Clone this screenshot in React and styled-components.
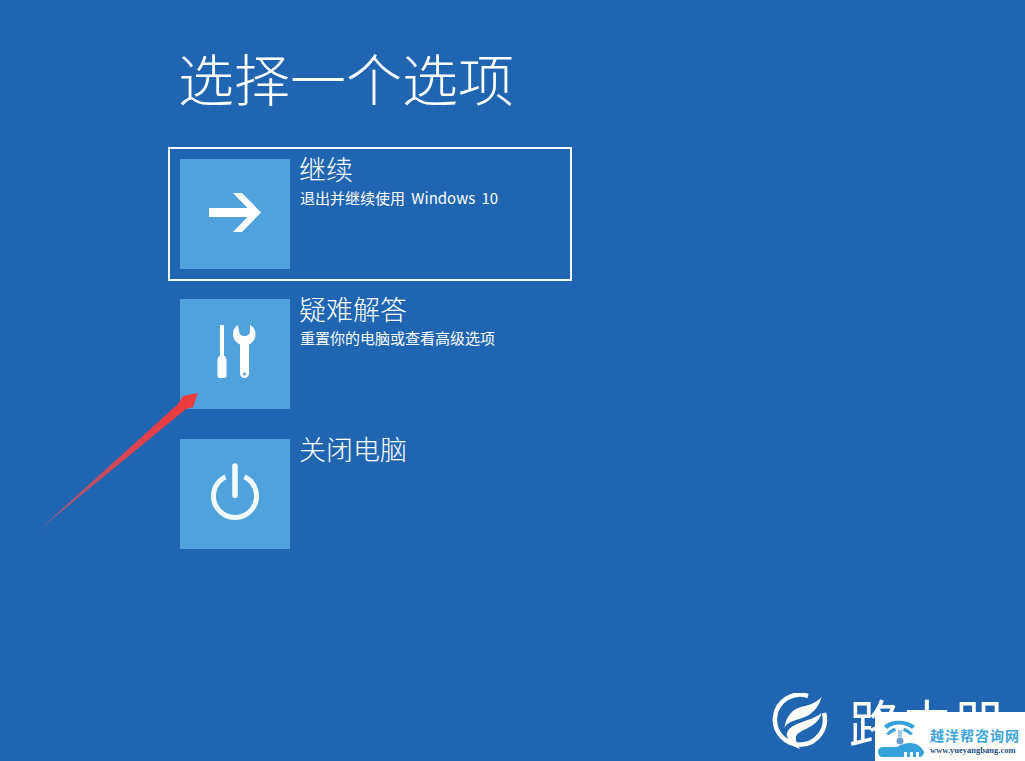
import React from "react"
import styled, { createGlobalStyle } from "styled-components"

const cjk = `"Noto Sans CJK SC", "Noto Sans", sans-serif`

const Global = createGlobalStyle`
  html, body { margin: 0; padding: 0; background: #1f65b1; }
  body { width: 1025px; height: 761px; overflow: hidden; }
`

const Screen = styled.div`
  position: relative;
  width: 1025px;
  height: 761px;
  overflow: hidden;
  background: #1f65b1;
  color: #fff;
  font-family: ${cjk};
  padding: 0 0 0 168px;
  box-sizing: border-box;
`

const Title = styled.h1`
  margin: 0;
  padding: 36px 0 0 10px;
  height: 147px;
  box-sizing: border-box;
  font-size: 56px;
  line-height: 82px;
  font-weight: 300;
  white-space: nowrap;
`

const Options = styled.div`
  display: flex;
  flex-direction: column;
  gap: 6px;
  width: 404px;
`

const Option = styled.div`
  display: flex;
  gap: 10px;
  height: 134px;
  padding: 10px;
  box-sizing: border-box;
  border: 2px solid ${(p) => (p.$selected ? "#f2f8fb" : "transparent")};
`

const Tile = styled.div`
  display: flex;
  align-items: center;
  justify-content: center;
  width: 110px;
  height: 110px;
  flex: none;
  background: #4fa2dc;
`

const Copy = styled.div`
  display: flex;
  flex-direction: column;
  margin: -7px 0 0 -1px;
`

const Name = styled.div`
  font-size: 27px;
  line-height: 34px;
  font-weight: 300;
  white-space: nowrap;
`

const Note = styled.div`
  font-size: 15px;
  line-height: 20px;
  margin: 2px 0 0 1px;
  font-weight: 400;
  white-space: nowrap;
  word-spacing: 3px;
`

const Pointer = styled.svg`
  position: absolute;
  left: 0;
  top: 0;
  pointer-events: none;
`

const BrandLogo = styled.svg`
  position: absolute;
  left: 771px;
  top: 693px;
`

const BrandName = styled.div`
  position: absolute;
  left: 849px;
  top: 680px;
  font-size: 52px;
  line-height: 84px;
  font-weight: 400;
  white-space: nowrap;
`

const Badge = styled.div`
  position: absolute;
  right: 0;
  bottom: 0;
  width: 150px;
  height: 49px;
  display: flex;
  background: #fff;
  overflow: hidden;
`

const BadgeMark = styled.svg`
  flex: none;
  margin: 2px 0 0 2px;
`

const BadgeText = styled.div`
  display: flex;
  flex-direction: column;
  align-items: flex-start;
  margin-left: 1px;
  padding-top: 14px;
`

const BadgeTitle = styled.div`
  color: #3ea6dc;
  font-size: 14px;
  line-height: 18px;
  font-weight: 700;
  white-space: nowrap;
  letter-spacing: 1px;
`

const BadgeUrl = styled.div`
  color: #1e4f82;
  font-family: "Liberation Serif", serif;
  font-size: 8.500px;
  line-height: 12px;
  font-weight: 700;
  white-space: nowrap;
`

const ArrowIcon = () => (
  <svg width="54" height="44" viewBox="0 0 54 44">
    <path d="M1 16H39.500L25 1H34L53 20.500 34 40H25L39.500 25H1z" fill="#fff" />
  </svg>
)

const ToolsIcon = () => (
  <svg width="60" height="70" viewBox="0 0 60 70">
    <path
      d="M15 7c0-.6.4-1 1-1h2c.6 0 1 .4 1 1v30h.5c.6 0 1 .3 1.200 1l.8 3v16c0 1.200-.8 2-2 2h-5c-1.200 0-2-.8-2-2V41l.8-3c.2-.7.6-1 1.200-1h.5z"
      fill="#fff"
    />
    <path
      fillRule="evenodd"
      d="M33 6C29.500 8 28 11.500 28 15c0 5 3 8.500 7 10.500V54.500a4.500 4.500 0 0 0 9 0V25.500c4-2 6.500-5.500 6.500-10.500 0-3.500-1.500-7-5.500-9v6c0 3-2.500 5-5.500 5S34 15 34 12zM39.500 53.500a1.500 1.500 0 1 0 0 3 1.500 1.500 0 0 0 0-3z"
      fill="#fff"
    />
  </svg>
)

const PowerIcon = () => (
  <svg width="54" height="62" viewBox="0 0 54 62">
    <path d="M17.500 13.700A21.500 21.500 0 1 0 36.500 13.700" fill="none" stroke="#f4fbff" strokeWidth="5" />
    <path d="M27 3v29.500" fill="none" stroke="#f4fbff" strokeWidth="5.500" strokeLinecap="round" />
  </svg>
)

const options = [
  { name: "继续", note: "退出并继续使用 Windows 10", icon: <ArrowIcon />, selected: true },
  { name: "疑难解答", note: "重置你的电脑或查看高级选项", icon: <ToolsIcon /> },
  { name: "关闭电脑", icon: <PowerIcon /> },
]

export default function App() {
  return (
    <Screen>
      <Global />
      <Title>选择一个选项</Title>
      <Options>
        {options.map((o) => (
          <Option key={o.name} $selected={o.selected}>
            <Tile>{o.icon}</Tile>
            <Copy>
              <Name>{o.name}</Name>
              {o.note && <Note>{o.note}</Note>}
            </Copy>
          </Option>
        ))}
      </Options>

      {/* red annotation arrow */}
      <Pointer width="1025" height="761" viewBox="0 0 1025 761">
        <defs>
          <linearGradient id="shaft" x1="43" y1="527" x2="198" y2="393" gradientUnits="userSpaceOnUse">
            <stop offset="0" stopColor="#a85a78" />
            <stop offset="0.55" stopColor="#dc4450" />
            <stop offset="1" stopColor="#f03a3c" />
          </linearGradient>
        </defs>
        <path d="M40 529L178 404 183 396 198 393 193 407 186 409z" fill="url(#shaft)" />
      </Pointer>

      <BrandName>路由器</BrandName>
      <BrandLogo width="58" height="58" viewBox="0 0 58 58">
        <path d="M37 3A25 25 0 1 0 53 20" fill="none" stroke="#fff" strokeWidth="4.500" />
        <path d="M50.700 3.700C46 9 40 12 30.700 13.700 23 15.500 15 22 13.300 35.300 15 31 19 28.700 25 27 34 24 45 22 50.700 3.700z" fill="#fff" />
        <path d="M50.700 20.300C44 25 37 27 30 29.500 22 32 16 36 15.700 42 17 49 22 54 29 56 25 50 24 45 25.700 42 30 36 46 35 50.700 20.300z" fill="#fff" />
      </BrandLogo>

      <Badge>
        <BadgeMark width="52" height="47" viewBox="0 0 52 47">
          <path d="M7 12C13 5 30 5 38 12l-3 3C28 9 16 9 10 15z" fill="#35a2dc" />
          <path d="M12 21l-3-1c4-5 8-6 9-6l1 3c-3 1-5 2-7 4zM33 21l3-1c-4-5-8-6-9-6l-1 3c3 1 5 2 7 4z" fill="#35a2dc" />
          <circle cx="23" cy="27" r="3.500" fill="#6c9bd2" />
          <path d="M21 16h4v7h-4z" fill="#9cc9e8" />
          <path d="M1 38c0-3 2-5 5-5h14c3-2 8-4 13-4 7 0 12 4 14 9 0 3-2 5-5 5H5c-2 0-4-2-4-5z" fill="#35a2dc" />
          <path d="M27 38h3v5h-3zM33 38h3v5h-3zM39 38h3v5h-3z" fill="#fff" />
        </BadgeMark>
        <BadgeText>
          <BadgeTitle>越洋帮咨询网</BadgeTitle>
          <BadgeUrl>www.yueyangbang.com</BadgeUrl>
        </BadgeText>
      </Badge>
    </Screen>
  )
}
